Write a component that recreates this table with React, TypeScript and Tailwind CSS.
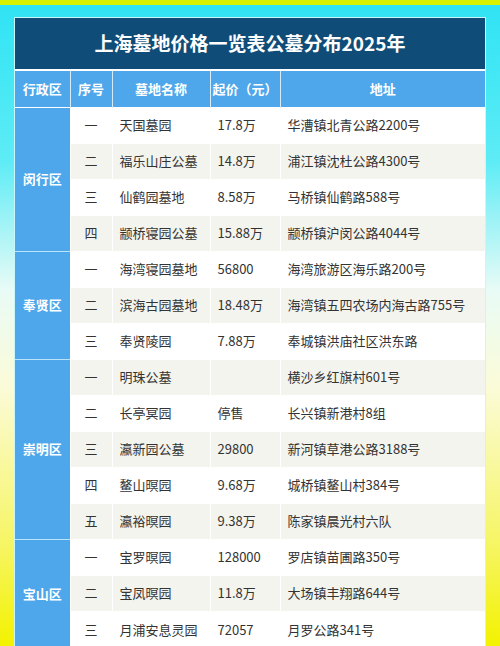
import React from "react";

type Row = [string, string, string, string];
const groups: { name: string; rows: Row[] }[] = [
  {
    name: "闵行区",
    rows: [
      ["一", "天国墓园", "17.8万", "华漕镇北青公路2200号"],
      ["二", "福乐山庄公墓", "14.8万", "浦江镇沈杜公路4300号"],
      ["三", "仙鹤园墓地", "8.58万", "马桥镇仙鹤路588号"],
      ["四", "颛桥寝园公墓", "15.88万", "颛桥镇沪闵公路4044号"],
    ],
  },
  {
    name: "奉贤区",
    rows: [
      ["一", "海湾寝园墓地", "56800", "海湾旅游区海乐路200号"],
      ["二", "滨海古园墓地", "18.48万", "海湾镇五四农场内海古路755号"],
      ["三", "奉贤陵园", "7.88万", "奉城镇洪庙社区洪东路"],
    ],
  },
  {
    name: "崇明区",
    rows: [
      ["一", "明珠公墓", "", "横沙乡红旗村601号"],
      ["二", "长亭冥园", "停售", "长兴镇新港村8组"],
      ["三", "瀛新园公墓", "29800", "新河镇草港公路3188号"],
      ["四", "鳌山暝园", "9.68万", "城桥镇鳌山村384号"],
      ["五", "瀛裕暝园", "9.38万", "陈家镇晨光村六队"],
    ],
  },
  {
    name: "宝山区",
    rows: [
      ["一", "宝罗暝园", "128000", "罗店镇苗圃路350号"],
      ["二", "宝凤暝园", "11.8万", "大场镇丰翔路644号"],
      ["三", "月浦安息灵园", "72057", "月罗公路341号"],
    ],
  },
];

export default function App() {
  let idx = 0;
  return (
    <div
      className="w-[500px] h-[646px] overflow-hidden relative bg-[linear-gradient(180deg,#2ee3f4_0%,#5eecf6_25%,#e9fbf6_45%,#fbfbd8_60%,#f6f560_85%,#f3f200_100%)]"
      style={{ fontFamily: '"Noto Sans CJK SC", "Noto Sans", sans-serif' }}
    >
      <div className="h-[5px] bg-[#d9f200]" />
      <div className="pt-[12px] px-[14px]">
        <div className="w-[472px] border border-[#c8f6fb] bg-white">
          <div className="h-[51px] bg-[#0f4d78] flex items-center justify-center text-white font-bold text-[19px]">
            上海墓地价格一览表公墓分布2025年
          </div>
          <div className="h-[2px] bg-white" />
          <table className="w-full border-collapse table-fixed text-[13px]">
            <colgroup>
              <col className="w-[55px]" />
              <col className="w-[42px]" />
              <col className="w-[98px]" />
              <col className="w-[70px]" />
              <col />
            </colgroup>
            <thead>
              <tr className="h-[36px] bg-[#4ea7ea] text-white font-bold text-[13px]">
                <th className="border-r border-[#d6ecfb] font-bold">行政区</th>
                <th className="border-r border-[#d6ecfb] font-bold">序号</th>
                <th className="border-r border-[#d6ecfb] font-bold">墓地名称</th>
                <th className="border-r border-[#d6ecfb] font-bold whitespace-nowrap">起价（元）</th>
                <th className="font-bold">地址</th>
              </tr>
            </thead>
            <tbody>
              {groups.map((g, gi) =>
                g.rows.map((r, ri) => {
                  const even = idx++ % 2 === 1;
                  const bg = even ? "bg-[#f4f4ef]" : "bg-white";
                  return (
                    <tr key={gi + "-" + ri} className={"h-[36px] text-[#333] " + bg}>
                      {ri === 0 && (
                        <td
                          rowSpan={g.rows.length}
                          className={
                            "bg-[#4ea7ea] text-white font-bold text-center border-r border-white " +
                            (gi > 0 ? "border-t border-t-[#b9e2fb]" : "border-t border-t-white")
                          }
                        >
                          {g.name}
                        </td>
                      )}
                      <td className="text-center border-r border-t border-white">{r[0]}</td>
                      <td className="pl-[7px] border-r border-t border-white whitespace-nowrap">{r[1]}</td>
                      <td className="pl-[7px] border-r border-t border-white whitespace-nowrap">{r[2]}</td>
                      <td className="pl-[7px] border-t border-white whitespace-nowrap">{r[3]}</td>
                    </tr>
                  );
                })
              )}
            </tbody>
          </table>
        </div>
      </div>
    </div>
  );
}
